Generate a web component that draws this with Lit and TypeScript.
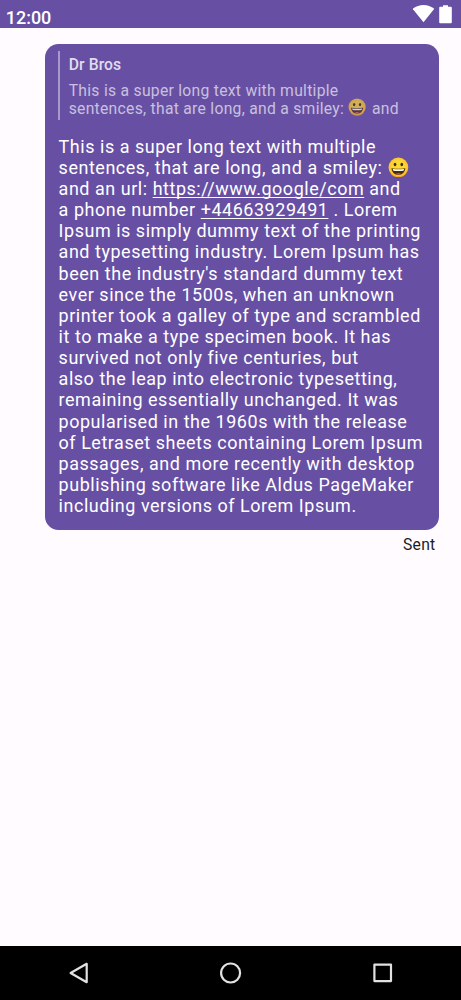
import { LitElement, html, css } from "lit";
import { customElement, property } from "lit/decorators.js";

@customElement("smiley-face")
class SmileyFace extends LitElement {
  static styles = css`
    :host { display: inline-block; width: 1.24em; height: 1em; vertical-align: -0.16em; }
    svg { display: block; width: 1.16em; height: 1.16em; margin: -0.12em 0 0 0.01em; }
  `;
  render() {
    return html`<svg viewBox="0 0 40 40" role="img" aria-label="Smiley">
      <defs>
        <radialGradient id="g" cx=".5" cy=".45" r=".55">
          <stop offset=".5" stop-color="#fdd835" />
          <stop offset=".85" stop-color="#fbc42d" />
          <stop offset="1" stop-color="#f39c1f" />
        </radialGradient>
      </defs>
      <circle cx="20" cy="20" r="19" fill="url(#g)" />
      <ellipse cx="13.5" cy="14.5" rx="2.6" ry="3.5" fill="#422b0d" />
      <ellipse cx="26.5" cy="14.5" rx="2.6" ry="3.5" fill="#422b0d" />
      <path d="M6.5 21.5Q20 23.5 33.5 21.5Q31.500 34.500 20 34.500Q8.500 34.500 6.500 21.500Z" fill="#4a2c0c" />
      <path d="M9 23Q20 24.500 31 23L29.800 26.200Q20 27.200 10.200 26.200Z" fill="#fff" />
      <path d="M14.500 32.500Q20 29.500 25.500 32.500Q23 33.800 20 33.800Q17 33.800 14.500 32.500Z" fill="#e0655c" />
    </svg>`;
  }
}

@customElement("status-bar")
class StatusBar extends LitElement {
  static styles = css`
    :host { display: flex; justify-content: space-between; height: 28px; background: #6750a4; color: #fff; }
    .time { font: 500 17.950px/20px Roboto, sans-serif; padding: 8px 0 0 5.800px; }
    svg { display: block; width: 48px; height: 28px; }
  `;
  render() {
    return html`<span class="time">12:00</span>
      <svg viewBox="413 0 48 28" fill="#fff">
        <path d="M412.700 8.800Q417.500 5 423.500 5Q429.500 5 434.300 8.800L423.500 22.300Z" />
        <path d="M440.200 6.700H443V5.200H448V6.700H450.800Q451.800 6.700 451.800 7.700V22.300Q451.800 23.300 450.800 23.300H440.200Q439.200 23.300 439.200 22.300V7.700Q439.200 6.700 440.200 6.700Z" />
      </svg>`;
  }
}

@customElement("quoted-message")
class QuotedMessage extends LitElement {
  @property() author = "";
  static styles = css`
    :host { display: flex; gap: 8.700px; height: 69px; white-space: nowrap; }
    .rule { display: block; width: 2px; height: 69px; }
    .content { padding-top: 5px; }
    .author { font: 500 15.700px/18px Roboto, sans-serif; letter-spacing: 0.1px; color: #e1dced; margin-bottom: 8px; }
    .text { font: 400 15.700px/18px Roboto, sans-serif; letter-spacing: 0.28px; color: #c9c0de; }
    smiley-face { opacity: 0.7; }
  `;
  render() {
    return html`<svg class="rule" viewBox="0 0 2 69"><rect x="0.300" width="1.400" height="69" fill="#c2b8dc" /></svg>
      <div class="content">
        <div class="author">${this.author}</div>
        <div class="text">This is a super long text with multiple</div>
        <div class="text">sentences, that are long, and a smiley: <smiley-face></smiley-face> and</div>
      </div>`;
  }
}

const BODY_LINES = [
  html`This is a super long text with multiple`,
  html`sentences, that are long, and a smiley: <smiley-face></smiley-face>`,
  html`and an url: <span class="link">https://www.google/com</span> and`,
  html`a phone number <span class="link">+44663929491</span> . Lorem`,
  "Ipsum is simply dummy text of the printing",
  "and typesetting industry. Lorem Ipsum has",
  "been the industry's standard dummy text",
  "ever since the 1500s, when an unknown",
  "printer took a galley of type and scrambled",
  "it to make a type specimen book. It has",
  "survived not only five centuries, but",
  "also the leap into electronic typesetting,",
  "remaining essentially unchanged. It was",
  "popularised in the 1960s with the release",
  "of Letraset sheets containing Lorem Ipsum",
  "passages, and more recently with desktop",
  "publishing software like Aldus PageMaker",
  "including versions of Lorem Ipsum.",
];

@customElement("nav-bar")
class NavBar extends LitElement {
  static styles = css`
    :host { display: block; height: 54px; background: #000; }
    svg { display: block; width: 461px; height: 54px; }
  `;
  render() {
    return html`<svg viewBox="0 946 461 54" fill="none" stroke="#e2e2e2" stroke-width="2.200" stroke-linejoin="round">
      <path d="M86.700 963.800V982.200L70.600 973Z" />
      <circle cx="230.600" cy="973" r="9.500" />
      <rect x="374.400" y="964.700" width="16.600" height="16.400" />
    </svg>`;
  }
}

@customElement("app-root")
class AppRoot extends LitElement {
  static styles = css`
    :host { display: flex; flex-direction: column; height: 1000px; width: 461px; background: #fffbff; overflow: hidden; }
    main { flex: 1; padding: 16px 22.500px 0 44.800px; }
    .bubble { box-sizing: border-box; height: 486.400px; border-radius: 13.500px; background: #6750a4; padding: 6.500px 13.500px 0 13.200px; }
    .body { margin: 16.100px 0 0 0.600px; color: #fff; font: 400 17.950px/21.150px Roboto, sans-serif; letter-spacing: 0.55px; white-space: nowrap; }
    .link { text-decoration: underline; text-decoration-thickness: 1px; text-underline-offset: 2px; text-decoration-skip-ink: none; }
    .status { font: 400 15.700px/20px Roboto, sans-serif; color: #1c1b1f; text-align: right; letter-spacing: 0.28px; padding: 4.600px 3px 0 0; }
  `;
  render() {
    return html`<status-bar></status-bar>
      <main>
        <div class="bubble">
          <quoted-message author="Dr Bros"></quoted-message>
          <div class="body">${BODY_LINES.map((line) => html`<div>${line}</div>`)}</div>
        </div>
        <div class="status">Sent</div>
      </main>
      <nav-bar></nav-bar>`;
  }
}
